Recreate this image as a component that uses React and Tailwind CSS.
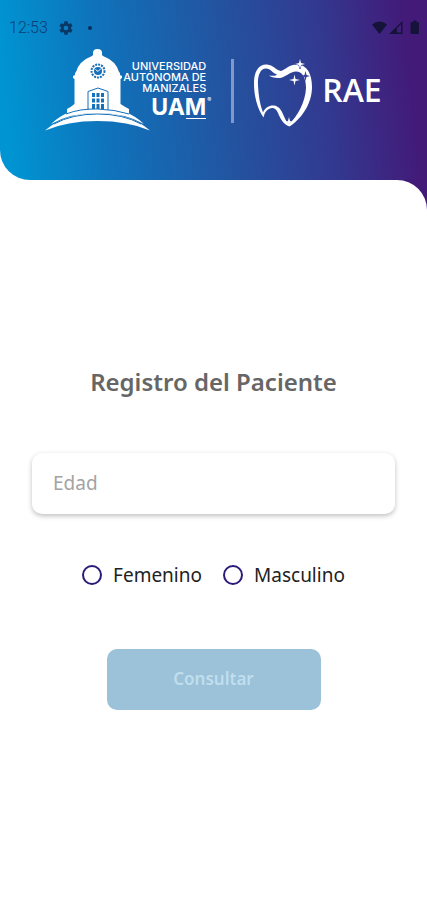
function StatusBar() {
  return (
    <div className="flex h-4 items-center justify-between pl-[9px] pr-[7px] text-[#15133a]">
      <div className="flex items-center">
        <span className="font-['Roboto',sans-serif] text-base font-light leading-4 text-[#0b3f70]">12:53</span>
        <svg viewBox="0 0 24 24" className="ml-2.5 h-4 w-4 text-[#0b3765]" fill="currentColor" aria-hidden="true">
          <path
            fillRule="evenodd"
            d="M19.4 13c.04-.33.06-.66.06-1s-.02-.67-.06-1l2.1-1.65a.5.5 0 0 0 .12-.64l-2-3.46a.5.5 0 0 0-.6-.22l-2.5 1a7.4 7.4 0 0 0-1.7-.98l-.37-2.65A.5.5 0 0 0 14 2h-4a.5.5 0 0 0-.5.42l-.37 2.65c-.6.25-1.17.58-1.7.98l-2.48-1a.5.5 0 0 0-.6.22l-2 3.46a.5.5 0 0 0 .12.64L4.58 11a8 8 0 0 0 0 2l-2.1 1.65a.5.5 0 0 0-.13.64l2 3.46c.13.22.39.3.61.22l2.48-1c.53.4 1.1.73 1.7.98l.37 2.65c.03.24.24.42.5.42h4c.25 0 .46-.18.5-.42l.37-2.65c.6-.25 1.17-.58 1.7-.98l2.48 1c.23.08.48 0 .6-.22l2-3.46a.5.5 0 0 0-.12-.64L19.4 13ZM12 15.500a3.500 3.500 0 1 1 0-7 3.500 3.500 0 0 1 0 7Z"
          />
        </svg>
        <span className="ml-3.5 h-1 w-1 rounded-full bg-[#0d2c5e]" />
      </div>
      <svg viewBox="0 0 48 16" className="h-4 w-12" fill="currentColor" aria-hidden="true">
        <path d="M0 4.500Q7.500-1.500 15 4.500L7.500 14Z" />
        <path d="M17 14 30.500 1V14Z M25 8V12.500H29V4.200Z" fillRule="evenodd" />
        <path d="M41 0.500h3.500V2H46q1 0 1 1v10q0 1-1 1h-6.500q-1 0-1-1V3q0-1 1-1H41Z" />
      </svg>
    </div>
  )
}

function Tower() {
  return (
    <svg viewBox="0 0 105 84" className="h-[84px] w-[105px] shrink-0" aria-hidden="true">
      <g fill="#fff">
        <path d="M48 7V4.500Q48 1 52.500 1T57 4.500V7L58 8Q71 13 74 24L75 25V27L77 28V30L75.500 31V60H29.500V31L28 30V28L30 27V25L31 24Q34 13 47 8Z" />
        <path d="M22 66V61Q26 59 29.500 56L52.500 52 75.500 56Q80 59 84 61V66L52.500 64Z" />
        <path d="M6 76Q24 59 52.500 59T99 76Q80 65 52.500 65T6 76Z" />
        <path d="M0 82.500Q20 65 52.500 65T105 82.500Q83 73 52.500 73T0 82.500Z" />
      </g>
      <g fill="none" stroke="#166fb9">
        <circle cx="53" cy="23" r="6.500" strokeWidth="2" strokeDasharray="2 1" />
        <path d="M43 62V43.500L53 40 63 43.500V62" strokeWidth="1" />
        <path d="M21 66Q35 60.500 52.500 61T84 66M9 76Q27 66 52.500 66T96 76" strokeWidth="1" />
      </g>
      <circle cx="53" cy="23" r="4" fill="#166fb9" />
      <path d="M50.500 21.500 53 23.500 56 20.500" fill="none" stroke="#fff" strokeWidth="1" />
      <path
        fill="#166fb9"
        d="M47 45h3v4h-3ZM51.500 45h3v4h-3ZM56 45h3v4h-3ZM47 50.500h3v4h-3ZM51.500 50.500h3v4h-3ZM56 50.500h3v4h-3ZM47 56h3v5h-3ZM51.500 56h3v5h-3ZM56 56h3v5h-3Z"
      />
    </svg>
  )
}

function Tooth() {
  return (
    <svg viewBox="0 0 60 68" className="h-[68px] w-[60px] shrink-0" fill="#fff" aria-hidden="true">
      <path d="M9.500 58.500C3 49 0 37 0 24C0 12 5 5 13 5.500C19 6 22 11 27 12C32 10 36 5 44 5.500C53 6 58 15 58 28C58 46 46 61 35.500 67.500C29 65 26.500 60 24 54C22 49 18.500 48 15 50C11 52 10.500 55 9.500 58.500ZM9 53.500C11 48 16 46 20 46.500C29 47.500 29 60 35 65C43 58 51.500 43 52 29C52 18 48 12.500 42 12.500C36 12.500 32 18 26 19C21 19.500 17 18 15 16.500C19 17 22 17 23 15.500C18 14 17 9.500 12 9.500C6 9.500 3.500 17 4 26C4.500 37 6 46 9 53.500Z" fillRule="evenodd" />
      <path d="M46 0 47 4 51 5 47 6 46 10 45 6 41 5 45 4Z" stroke="#2f429b" strokeWidth="1" paintOrder="stroke" />
      <path d="M40.500 15.500 41.500 20 46 21 41.500 22 40.500 26.500 39.500 22 35 21 39.500 20Z" />
      <path d="M51.500 12 52.500 16 56 17 52.500 18 51.500 22 50.500 18 47 17 50.500 16Z" fill="#33409a" />
      <path d="M35 58 36 62 39 63 36 64 35 67 34 64 31 63 34 62Z" />
    </svg>
  )
}

function Header() {
  return (
    <header className="h-[180px] rounded-bl-[30px] bg-[linear-gradient(84deg,#0094d2_3%,#0f73bb_25%,#24529f_54%,#323990_75%,#431a78_95%)] pt-5">
      <StatusBar />
      <div className="flex justify-center pt-3 text-white">
        <Tower />
        <div className="-ml-[25px] flex w-[81px] shrink-0 flex-col items-end pt-[13px] font-['Inter',sans-serif]">
          <div className="flex flex-col items-end whitespace-nowrap text-[11px] font-medium leading-[11px]">
            <span>UNIVERSIDAD</span>
            <span>AUTÓNOMA DE</span>
            <span>MANIZALES</span>
          </div>
          <div className="relative mt-[2px] text-[23px] font-bold leading-[22px]">
            UAM
            <span className="absolute -right-[5px] top-0 text-[6px] leading-[8px]">®</span>
          </div>
          <span className="h-[1px] w-5 bg-white" />
        </div>
        <span className="ml-[25px] mt-[11px] h-[64px] w-[3px] shrink-0 bg-[#8298ca]" />
        <div className="ml-5 flex items-start pt-[11px]">
          <Tooth />
          <span className="ml-2 mt-3 font-['Open_Sans',sans-serif] text-[32px] font-semibold leading-[38px]">RAE</span>
        </div>
      </div>
    </header>
  )
}

function SexOption({ value, label }) {
  return (
    <label className="flex items-center gap-[11px] text-[19px] leading-6 text-[#222]">
      <input
        type="radio"
        name="sexo"
        value={value}
        className="h-5 w-5 appearance-none rounded-full border-2 border-[#2c1a78] bg-white checked:bg-[#2c1a78]"
      />
      {label}
    </label>
  )
}

export default function App() {
  return (
    <div className="flex min-h-screen flex-col bg-linear-to-r from-white from-50% to-[#431a78] to-50%">
      <Header />
      <main className="flex flex-1 flex-col justify-center rounded-tr-[30px] bg-white px-8 pb-[3px] font-['Noto_Sans',sans-serif]">
        <form className="flex flex-col items-center" onSubmit={(e) => e.preventDefault()}>
          <h1 className="text-2xl font-semibold leading-7 text-[#666]">Registro del Paciente</h1>
          <input
            type="text"
            inputMode="numeric"
            aria-label="Edad"
            placeholder="Edad"
            className="mt-[57px] h-[61px] w-full rounded-[10px] bg-white px-[21px] text-[19px] shadow-[0_2px_5px_rgba(0,0,0,0.25)] outline-none placeholder:text-[#a3a3a3]"
          />
          <div className="mt-[49px] flex gap-[21px]">
            <SexOption value="f" label="Femenino" />
            <SexOption value="m" label="Masculino" />
          </div>
          <button
            type="submit"
            className="mt-[62px] h-[61px] w-[214px] rounded-[10px] bg-[#9bc2d9] text-[17px] font-semibold text-[#c0deed]"
          >
            Consultar
          </button>
        </form>
      </main>
    </div>
  )
}
